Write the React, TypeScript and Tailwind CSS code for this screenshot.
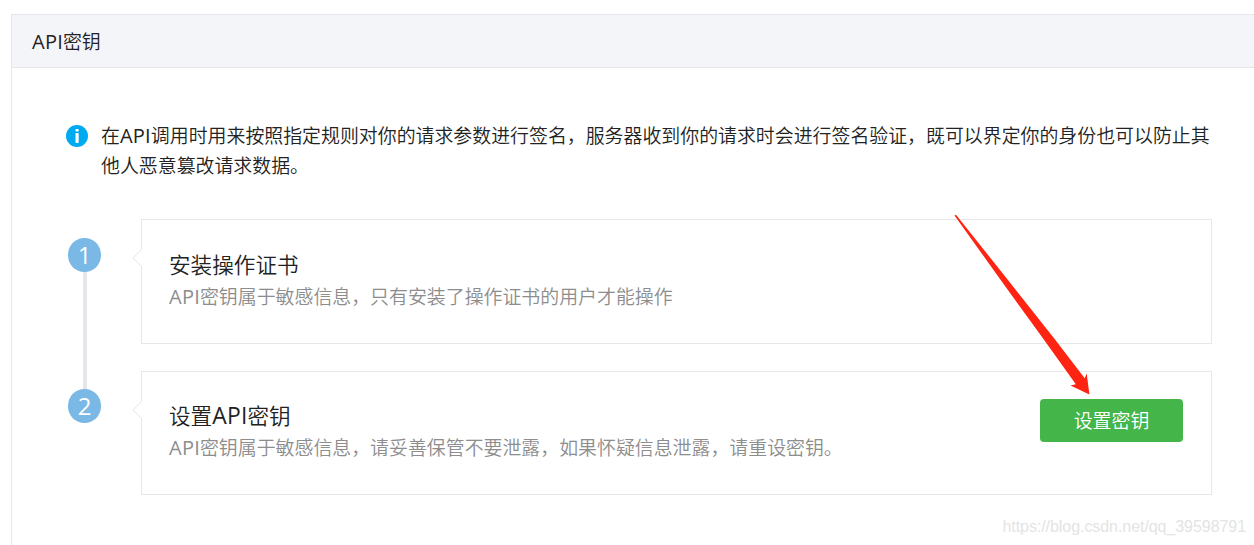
import type { ReactNode } from "react";

interface StepProps {
  index: number;
  title: ReactNode;
  description: ReactNode;
  last?: boolean;
  children?: ReactNode;
}

function Latin({ children }: { children: ReactNode }) {
  return (
    <span className="text-[1.06em] leading-none font-normal tracking-[0.01em]">{children}</span>
  );
}

function InfoIcon() {
  return (
    <svg width="22" height="22" viewBox="0 0 22 22" className="mt-1 shrink-0">
      <circle cx="11" cy="11" r="11" fill="#00aaf1" />
      <rect x="9.5" y="4" width="3.2" height="2.6" rx="0.8" fill="#fff" />
      <rect x="9.5" y="8" width="3.2" height="10" rx="0.8" fill="#fff" />
    </svg>
  );
}

function Notch() {
  return (
    <svg
      width="11"
      height="20"
      viewBox="0 0 11 20"
      className="absolute -left-[10.5px] top-7"
    >
      <path d="M11 0.3 1 10 11 19.7z" fill="#fff" />
      <path d="M10 1 1 10l9 9" fill="none" stroke="#e7e7eb" />
    </svg>
  );
}

function Step({ index, title, description, last, children }: StepProps) {
  return (
    <li className="flex">
      <div
        className={`flex w-[33px] shrink-0 flex-col items-center ${
          last ? "pt-[18px]" : "pt-[19px]"
        }`}
      >
        <span className="relative z-10 flex h-[34px] w-[33px] items-center justify-center rounded-full bg-[#7ab8e6] pb-px text-[24px] leading-none font-normal text-white">
          {index}
        </span>
        {!last && <span className="-mb-[19px] w-1 flex-1 bg-[#e4e6ec]" />}
      </div>
      <div
        className={`relative ml-10 flex w-[1071px] justify-between border border-[#e7e7eb] pl-[27px] pr-7 ${
          last ? "h-[124px]" : "mb-[27px] h-[125px]"
        }`}
      >
        <Notch />
        <div className={last ? "pt-7" : "pt-[29px]"}>
          <h3 className="text-[21.6px] leading-8 text-[#222]">{title}</h3>
          <p className="text-[18.92px] leading-8 text-[#8d8d8d]">{description}</p>
        </div>
        {children}
      </div>
    </li>
  );
}

function Arrow() {
  return (
    <svg
      width="140"
      height="184"
      viewBox="950 212 140 184"
      className="pointer-events-none absolute left-[950px] top-[212px] z-20"
    >
      <path
        d="M954.5 215.5 956 214.8 1000 270 1055 339.5 1084.7 378.3 1086.7 373.5 1089.4 394.5 1070.5 385.6 1075.8 384.3 1042 337 1005 286z"
        fill="#ff2412"
      />
    </svg>
  );
}

export default function App() {
  return (
    <main className="relative h-[545px] w-[1254px] overflow-hidden bg-white pl-[11px] pt-[14px] font-['Open_Sans','Noto_Sans_CJK_SC',sans-serif] font-[350] text-[#222]">
      <section className="h-full border-l border-t border-[#e7e7eb]">
        <header className="flex h-[53px] items-center border-b border-[#e7e7eb] bg-[#f4f5f9] pl-5 pt-0.5">
          <h2 className="text-[18.92px] leading-[30px]">
            <Latin>API</Latin>密钥
          </h2>
        </header>

        <div className="pl-[54px] pt-[53px]">
          <div className="flex gap-[13px]">
            <InfoIcon />
            <p className="whitespace-nowrap text-[18.92px] leading-[30px]">
              在<Latin>API</Latin>调用时用来按照指定规则对你的请求参数进行签名，服务器收到你的请求时会进行签名验证，既可以界定你的身份也可以防止其
              <br />
              他人恶意篡改请求数据。
            </p>
          </div>

          <ol className="ml-0.5 mt-[38px]">
            <Step
              index={1}
              title="安装操作证书"
              description={
                <>
                  <Latin>API</Latin>密钥属于敏感信息，只有安装了操作证书的用户才能操作
                </>
              }
            />
            <Step
              index={2}
              title={
                <>
                  设置<Latin>API</Latin>密钥
                </>
              }
              description={
                <>
                  <Latin>API</Latin>密钥属于敏感信息，请妥善保管不要泄露，如果怀疑信息泄露，请重设密钥。
                </>
              }
              last
            >
              <button
                type="button"
                className="mt-[27px] h-[43px] w-[143px] rounded-[4px] bg-[#44b549] pt-0.5 text-[18.92px] text-white"
              >
                设置密钥
              </button>
            </Step>
          </ol>
        </div>
      </section>

      <Arrow />
      <span className="absolute bottom-1.5 right-2 font-['Liberation_Sans',Arial,sans-serif] text-[16px] leading-6 font-normal tracking-[-0.06px] text-[#e4e4e4]">
        https://blog.csdn.net/qq_39598791
      </span>
    </main>
  );
}
